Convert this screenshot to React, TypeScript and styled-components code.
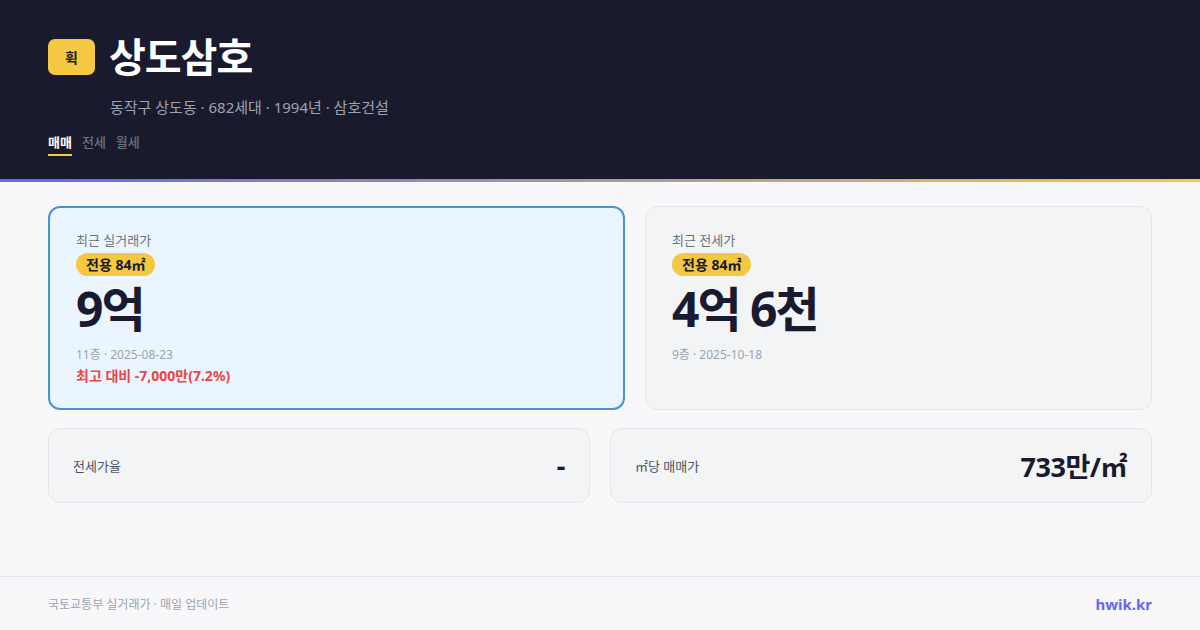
import React from 'react';
import styled, { createGlobalStyle } from 'styled-components';

const GlobalStyle = createGlobalStyle`
  html, body {
    margin: 0;
    padding: 0;
    background: #f8f8fa;
  }
  body {
    font-family: "Noto Sans", "Noto Sans CJK KR", sans-serif;
  }
`;

const tabs = ['매매', '전세', '월세'];

const App = () => {
  return (
    <Page>
      <GlobalStyle />
      <Header>
        <TitleRow>
          <LogoBadge>휙</LogoBadge>
          <Title>상도삼호</Title>
        </TitleRow>
        <SubTitle>동작구 상도동 · 682세대 · 1994년 · 삼호건설</SubTitle>
        <TabRow>
          {tabs.map((t, i) => (
            <Tab key={t} active={i === 0}>
              {t}
            </Tab>
          ))}
        </TabRow>
      </Header>
      <GradientBar />

      <Main>
        <TopRow>
          <PriceCard highlight>
            <CardLabel>최근 실거래가</CardLabel>
            <AreaBadge>전용 84㎡</AreaBadge>
            <BigPrice>9억</BigPrice>
            <Meta>11층 · 2025-08-23</Meta>
            <Diff>최고 대비 -7,000만(7.2%)</Diff>
          </PriceCard>
          <PriceCard>
            <CardLabel>최근 전세가</CardLabel>
            <AreaBadge>전용 84㎡</AreaBadge>
            <BigPrice>4억 6천</BigPrice>
            <Meta>9층 · 2025-10-18</Meta>
          </PriceCard>
        </TopRow>

        <BottomRow>
          <StatCard>
            <StatLabel>전세가율</StatLabel>
            <StatValue>-</StatValue>
          </StatCard>
          <StatCard>
            <StatLabel>㎡당 매매가</StatLabel>
            <StatValue>733만/㎡</StatValue>
          </StatCard>
        </BottomRow>
      </Main>

      <Footer>
        <FooterText>국토교통부 실거래가 · 매일 업데이트</FooterText>
        <Brand>hwik.kr</Brand>
      </Footer>
    </Page>
  );
};

export default App;

//Layout

export const Page = styled.div`
  width: 1200px;
  height: 630px;
  display: flex;
  flex-direction: column;
  background: #f8f8fa;
  overflow: hidden;
`;

export const Header = styled.div`
  background: #1a1a2e;
  height: 179px;
  box-sizing: border-box;
  padding: 39px 48px 0;
  display: flex;
  flex-direction: column;
`;

export const TitleRow = styled.div`
  display: flex;
  flex-direction: row;
  align-items: center;
  gap: 14px;
  height: 36px;
`;

export const LogoBadge = styled.div`
  width: 47px;
  height: 36px;
  border-radius: 7px;
  background: #f5c842;
  color: #1a1a2e;
  font-size: 14px;
  font-weight: 700;
  display: flex;
  align-items: center;
  justify-content: center;
`;

export const Title = styled.h1`
  margin: 0;
  color: #ffffff;
  font-size: 40px;
  font-weight: 700;
  line-height: 36px;
  letter-spacing: -1px;
`;

export const SubTitle = styled.div`
  margin-top: 22px;
  padding-left: 62px;
  color: #9ca3af;
  font-size: 15px;
  line-height: 20px;
`;

export const TabRow = styled.div`
  display: flex;
  flex-direction: row;
  gap: 10px;
  margin-top: 16px;
`;

export const Tab = styled.div<{ active?: boolean }>`
  font-size: 13px;
  line-height: 18px;
  font-weight: ${(p) => (p.active ? 700 : 500)};
  color: ${(p) => (p.active ? '#ffffff' : '#6b7280')};
  padding-bottom: 3px;
  border-bottom: 2px solid ${(p) => (p.active ? '#f5c842' : 'transparent')};
`;

export const GradientBar = styled.div`
  height: 3px;
  background: linear-gradient(90deg, #6366f1 0%, #f5c842 100%);
`;

export const Main = styled.div`
  flex: 1;
  padding: 24px 48px 0;
  display: flex;
  flex-direction: column;
  gap: 18px;
`;

export const TopRow = styled.div`
  display: grid;
  grid-template-columns: 577fr 507fr;
  gap: 20px;
`;

export const PriceCard = styled.div<{ highlight?: boolean }>`
  height: 204px;
  box-sizing: border-box;
  border-radius: 12px;
  border: ${(p) => (p.highlight ? '2px solid #4a90d9' : '1px solid #e5e7eb')};
  background: ${(p) => (p.highlight ? '#ebf5ff' : '#f3f4f6')};
  padding: ${(p) => (p.highlight ? '22px 26px' : '23px 26px')};
  display: flex;
  flex-direction: column;
  align-items: flex-start;
`;

export const CardLabel = styled.div`
  font-size: 13px;
  line-height: 20px;
  color: #6b7280;
`;

export const AreaBadge = styled.span`
  margin-top: 3px;
  background: #f5c842;
  color: #1a1a2e;
  font-size: 14px;
  font-weight: 700;
  line-height: 23px;
  padding: 0 10px;
  border-radius: 12px;
`;

export const BigPrice = styled.div`
  margin-top: 4px;
  font-size: 48px;
  font-weight: 700;
  line-height: 58px;
  color: #1a1a2e;
  letter-spacing: -2px;
`;

export const Meta = styled.div`
  margin-top: 8px;
  font-size: 12px;
  line-height: 18px;
  color: #9ca3af;
`;

export const Diff = styled.div`
  margin-top: 2px;
  font-size: 14px;
  line-height: 20px;
  font-weight: 700;
  color: #ef4444;
`;

export const BottomRow = styled.div`
  display: grid;
  grid-template-columns: 1fr 1fr;
  gap: 20px;
`;

export const StatCard = styled.div`
  height: 75px;
  box-sizing: border-box;
  border-radius: 12px;
  border: 1px solid #e5e7eb;
  background: #f3f4f6;
  padding: 0 24px;
  display: flex;
  flex-direction: row;
  align-items: center;
  justify-content: space-between;
`;

export const StatLabel = styled.span`
  font-size: 13px;
  color: #4b5563;
`;

export const StatValue = styled.span`
  font-size: 27px;
  font-weight: 700;
  color: #1a1a2e;
  letter-spacing: -0.5px;
`;

export const Footer = styled.div`
  height: 54px;
  box-sizing: border-box;
  border-top: 1px solid #e5e7eb;
  padding: 0 48px;
  display: flex;
  flex-direction: row;
  align-items: center;
  justify-content: space-between;
`;

export const FooterText = styled.span`
  font-size: 12px;
  color: #9ca3af;
`;

export const Brand = styled.span`
  font-size: 15px;
  font-weight: 700;
  color: #6366f1;
`;
